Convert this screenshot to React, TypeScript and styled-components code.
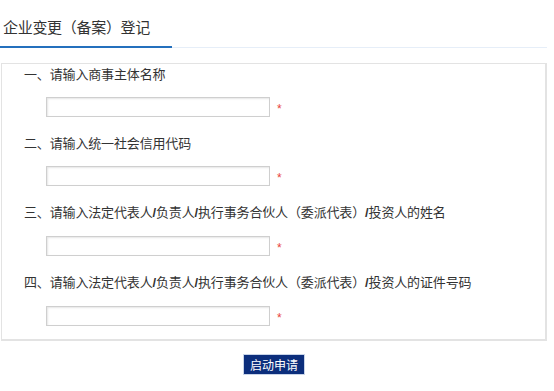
import React from "react";
import styled, { createGlobalStyle } from "styled-components";

const GlobalStyle = createGlobalStyle`
  html, body {
    margin: 0;
    padding: 0;
    background: #ffffff;
  }
  body {
    font-family: "Noto Sans CJK SC", "Microsoft YaHei", sans-serif;
    color: #333333;
  }
`;

const Page = styled.div`
  width: 554px;
  display: flex;
  flex-direction: column;
`;

const TabBar = styled.div`
  display: flex;
  align-items: flex-end;
  height: 47px;
  margin-right: 7px;
  border-bottom: 1px solid #e6eef8;
`;

const Tab = styled.div`
  width: 172px;
  height: 45px;
  box-sizing: border-box;
  padding-left: 3px;
  padding-top: 14px;
  font-size: 15px;
  line-height: 20px;
  color: #333333;
  border-bottom: 2px solid #2470bd;
  margin-bottom: -1px;
  letter-spacing: -0.3px;
`;

const FormBox = styled.div`
  margin: 15px 7px 0 1px;
  border: 1px solid #e3e3e3;
  border-width: 1px 2px 2px 1px;
  padding: 0 0 13px 22px;
  display: flex;
  flex-direction: column;
  gap: 16px;
`;

const Field = styled.div`
  display: flex;
  flex-direction: column;
  gap: 13px;
`;

const Label = styled.div`
  font-size: 13px;
  line-height: 20px;
  color: #333333;
  white-space: nowrap;
  letter-spacing: -0.15px;
`;

const Slash = styled.span`
  font-weight: bold;
  font-family: "Liberation Sans", sans-serif;
`;

const InputRow = styled.div`
  display: flex;
  align-items: center;
  padding-left: 22px;
  gap: 7px;
`;

const TextInput = styled.input`
  width: 224px;
  height: 20px;
  box-sizing: border-box;
  border: 1px solid #cfcfcf;
  box-shadow: inset 1px 1px 2px rgba(0, 0, 0, 0.1);
  background: #ffffff;
  padding: 0 4px;
  outline: none;
  margin: 0;
`;

const Required = styled.span`
  color: #e8433a;
  font-size: 12px;
  line-height: 12px;
  font-family: "Liberation Sans", sans-serif;
  margin-top: 3px;
`;

const Actions = styled.div`
  display: flex;
  justify-content: center;
  padding-top: 13px;
  margin-right: 7px;
  margin-left: 1px;
`;

const Button = styled.button`
  height: 21px;
  width: 62px;
  padding: 0;
  background: #0c2e7c;
  color: #ffffff;
  border: 1px solid #c8d4e8;
  font-family: "Noto Sans CJK SC", sans-serif;
  font-size: 12px;
  line-height: 19px;
  cursor: pointer;
`;

const renderLabel = (text: string) =>
  text.split("/").map((part, i, arr) => (
    <React.Fragment key={i}>
      {part}
      {i < arr.length - 1 && <Slash>/</Slash>}
    </React.Fragment>
  ));

const fields = [
  "一、请输入商事主体名称",
  "二、请输入统一社会信用代码",
  "三、请输入法定代表人/负责人/执行事务合伙人（委派代表）/投资人的姓名",
  "四、请输入法定代表人/负责人/执行事务合伙人（委派代表）/投资人的证件号码",
];

export default function App() {
  return (
    <>
      <GlobalStyle />
      <Page>
        <TabBar>
          <Tab>企业变更（备案）登记</Tab>
        </TabBar>
        <FormBox>
          {fields.map((f) => (
            <Field key={f}>
              <Label>{renderLabel(f)}</Label>
              <InputRow>
                <TextInput type="text" />
                <Required>*</Required>
              </InputRow>
            </Field>
          ))}
        </FormBox>
        <Actions>
          <Button>启动申请</Button>
        </Actions>
      </Page>
    </>
  );
}
